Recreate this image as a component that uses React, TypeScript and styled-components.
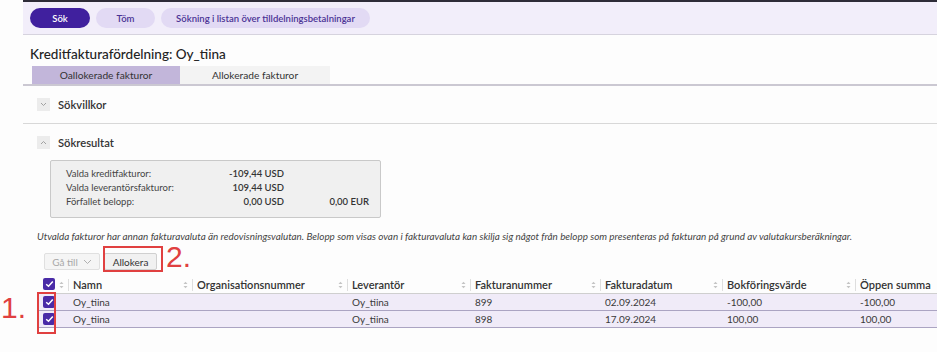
import React from "react";
import styled, { createGlobalStyle } from "styled-components";

const Global = createGlobalStyle`
  html, body { margin: 0; padding: 0; background: #fdfdfd; }
  body { font-family: Lato, "Noto Sans", sans-serif; color: #222; }
  * { box-sizing: border-box; }
`;

const Page = styled.div`
  position: relative;
  width: 937px;
  height: 352px;
  overflow: hidden;
  padding-left: 23px;
`;

const Main = styled.div`
  border-top: 2px solid #2e2c38;
`;

const Toolbar = styled.div`
  height: 33px;
  background: #f2eefa;
  border-bottom: 1px solid #d6d3de;
  display: flex;
  align-items: center;
  gap: 6px;
  padding: 0 7px;
`;

const PillButton = styled.button<{ $primary?: boolean; $w: number }>`
  height: 20px;
  width: ${(p) => p.$w}px;
  border: none;
  border-radius: 10px;
  font-family: inherit;
  font-size: 9.5px;
  font-weight: 600;
  padding: 0;
  background: ${(p) => (p.$primary ? "#40209e" : "#e2daf4")};
  color: ${(p) => (p.$primary ? "#ffffff" : "#4b3394")};
`;

const Title = styled.h1`
  margin: 0;
  padding: 6px 7px 0;
  height: 31px;
  display: flex;
  align-items: center;
  font-size: 13.5px;
  font-weight: 500;
  color: #222;
`;

const Tabs = styled.div`
  display: flex;
  padding-left: 9px;
  border-bottom: 2px solid #cbc8d2;
`;

const Tab = styled.div<{ $active?: boolean; $w: number }>`
  width: ${(p) => p.$w}px;
  height: 18px;
  display: flex;
  align-items: center;
  justify-content: center;
  font-size: 10.2px;
  color: #333;
  background: ${(p) => (p.$active ? "#c2b6da" : "#f3f3f3")};
`;

const SectionHead = styled.div<{ $h: number; $border?: boolean }>`
  height: ${(p) => p.$h}px;
  display: flex;
  align-items: center;
  gap: 8px;
  padding-left: 14px;
  font-size: 11.2px;
  font-weight: 600;
  color: #333;
  border-bottom: ${(p) => (p.$border ? "1px solid #d8d8d8" : "none")};
`;

const ChevronBox = styled.span`
  width: 13px;
  height: 13px;
  background: #ececec;
  display: inline-flex;
  align-items: center;
  justify-content: center;
`;

const Summary = styled.div`
  margin-left: 27px;
  width: 331px;
  height: 58px;
  background: #f0f0f0;
  border: 1px solid #c9c9c9;
  border-radius: 2px;
  padding: 5px 11px 0 15px;
  display: grid;
  grid-template-columns: 134px 84px 85px;
  grid-auto-rows: 14px;
  font-size: 9.5px;
  color: #444;
  align-items: center;
`;

const SumLabel = styled.span``;
const SumValue = styled.span`
  text-align: right;
  font-weight: 600;
  color: #333;
`;

const Note = styled.p`
  margin: 0;
  padding: 12px 0 0 14px;
  height: 29px;
  font-size: 9.9px;
  line-height: 12px;
  font-style: italic;
  color: #444;
  white-space: nowrap;
`;

const ActionRow = styled.div`
  display: flex;
  gap: 4px;
  padding: 6px 0 0 21px;
  height: 28px;
`;

const ActionButton = styled.button<{ $disabled?: boolean; $w: number }>`
  width: ${(p) => p.$w}px;
  height: 17px;
  padding: 0;
  font-family: inherit;
  font-size: 10px;
  border: 1px solid ${(p) => (p.$disabled ? "#e0e0e0" : "#d0d0d0")};
  background: ${(p) => (p.$disabled ? "#f5f5f5" : "#f1f1f1")};
  color: ${(p) => (p.$disabled ? "#a8a8a8" : "#333")};
  border-radius: 2px;
  display: inline-flex;
  align-items: center;
  justify-content: center;
  gap: 5px;
`;

const Table = styled.div`
  margin-left: 14px;
`;

const cols = "31px 124px 155px 123px 130px 122px 133px 1fr";

const HeadRow = styled.div`
  display: grid;
  grid-template-columns: ${cols};
  height: 19px;
  border-bottom: 1px solid #cfcfcf;
  font-size: 11px;
  font-weight: 600;
  color: #333;
`;

const HeadCell = styled.div<{ $sep?: boolean }>`
  position: relative;
  display: flex;
  align-items: center;
  padding-left: 5px;
  ${(p) =>
    p.$sep
      ? `&::before { content: ""; position: absolute; left: 0; top: 4px; height: 12px; width: 1px; background: #dedede; }`
      : ""}
`;

const SortIcon = styled.svg`
  position: absolute;
  right: 4px;
  top: 6px;
`;

const BodyRow = styled.div`
  display: grid;
  grid-template-columns: ${cols};
  height: 17px;
  background: #f0ebf8;
  border-bottom: 1px solid #aba4c2;
  font-size: 10px;
  color: #3a3a3a;
`;

const Cell = styled.div`
  display: flex;
  align-items: center;
  padding-left: 5px;
  white-space: nowrap;
  overflow: hidden;
`;

const CheckCell = styled.div`
  position: relative;
  display: flex;
  align-items: center;
  padding-left: 6px;
`;

const Check = styled.span`
  width: 12px;
  height: 12px;
  border-radius: 2px;
  background: #4a2ba7;
  display: inline-flex;
  align-items: center;
  justify-content: center;
`;

const RedBox = styled.div<{ $x: number; $y: number; $w: number; $h: number }>`
  position: absolute;
  left: ${(p) => p.$x}px;
  top: ${(p) => p.$y}px;
  width: ${(p) => p.$w}px;
  height: ${(p) => p.$h}px;
  border: 2px solid #e04040;
`;

const RedLabel = styled.div<{ $x: number; $y: number }>`
  position: absolute;
  left: ${(p) => p.$x}px;
  top: ${(p) => p.$y}px;
  font-family: "Liberation Sans", Arial, sans-serif;
  font-size: 30px;
  color: #e04040;
  line-height: 1;
`;

const Chevron = ({ up }: { up?: boolean }) => (
  <svg width="7" height="5" viewBox="0 0 7 5">
    <path
      d={up ? "M1 4 L3.5 1.5 L6 4" : "M1 1 L3.5 3.5 L6 1"}
      fill="none"
      stroke="#999"
      strokeWidth="0.9"
    />
  </svg>
);

const CheckMark = () => (
  <svg width="9" height="8" viewBox="0 0 9 8">
    <path d="M1.2 4.2 L3.5 6.3 L7.8 1.5" fill="none" stroke="#fff" strokeWidth="1.5" />
  </svg>
);

const Sort = () => (
  <SortIcon width="5" height="8" viewBox="0 0 5 8">
    <path d="M0.5 3 L2.5 0.8 L4.5 3 Z" fill="#c4c4c4" />
    <path d="M0.5 5 L2.5 7.2 L4.5 5 Z" fill="#c4c4c4" />
  </SortIcon>
);

const headers = [
  "Namn",
  "Organisationsnummer",
  "Leverantör",
  "Fakturanummer",
  "Fakturadatum",
  "Bokföringsvärde",
  "Öppen summa",
];

const rows = [
  { name: "Oy_tiina", lev: "Oy_tiina", nr: "899", date: "02.09.2024", bok: "-100,00", open: "-100,00" },
  { name: "Oy_tiina", lev: "Oy_tiina", nr: "898", date: "17.09.2024", bok: "100,00", open: "100,00" },
];

export default function App() {
  return (
    <Page>
      <Global />
      <Main>
        <Toolbar>
          <PillButton $primary $w={60}>Sök</PillButton>
          <PillButton $w={59}>Töm</PillButton>
          <PillButton $w={209}>Sökning i listan över tilldelningsbetalningar</PillButton>
        </Toolbar>
        <Title>Kreditfakturafördelning: Oy_tiina</Title>
        <Tabs>
          <Tab $active $w={148}>Oallokerade fakturor</Tab>
          <Tab $w={150}>Allokerade fakturor</Tab>
        </Tabs>
        <SectionHead $h={38} $border>
          <ChevronBox><Chevron /></ChevronBox>
          Sökvillkor
        </SectionHead>
        <SectionHead $h={36}>
          <ChevronBox><Chevron up /></ChevronBox>
          Sökresultat
        </SectionHead>
        <Summary>
          <SumLabel>Valda kreditfakturor:</SumLabel>
          <SumValue>-109,44 USD</SumValue>
          <span />
          <SumLabel>Valda leverantörsfakturor:</SumLabel>
          <SumValue>109,44 USD</SumValue>
          <span />
          <SumLabel>Förfallet belopp:</SumLabel>
          <SumValue>0,00 USD</SumValue>
          <SumValue>0,00 EUR</SumValue>
        </Summary>
        <Note>
          Utvalda fakturor har annan fakturavaluta än redovisningsvalutan. Belopp som visas ovan i fakturavaluta kan skilja sig något från belopp som presenteras på fakturan på grund av valutakursberäkningar.
        </Note>
        <ActionRow>
          <ActionButton $disabled $w={56}>
            Gå till
            <svg width="9" height="6" viewBox="0 0 9 6">
              <path d="M1 1 L4.5 4.5 L8 1" fill="none" stroke="#b0b0b0" strokeWidth="1" />
            </svg>
          </ActionButton>
          <ActionButton $w={53}>Allokera</ActionButton>
        </ActionRow>
        <Table>
          <HeadRow>
            <CheckCell>
              <Check><CheckMark /></Check>
              <Sort />
            </CheckCell>
            {headers.map((h, i) => (
              <HeadCell key={h} $sep>
                {h}
                {i < headers.length - 1 && <Sort />}
              </HeadCell>
            ))}
          </HeadRow>
          {rows.map((r) => (
            <BodyRow key={r.nr}>
              <CheckCell>
                <Check><CheckMark /></Check>
              </CheckCell>
              <Cell>{r.name}</Cell>
              <Cell />
              <Cell>{r.lev}</Cell>
              <Cell>{r.nr}</Cell>
              <Cell>{r.date}</Cell>
              <Cell>{r.bok}</Cell>
              <Cell>{r.open}</Cell>
            </BodyRow>
          ))}
        </Table>
      </Main>
      <RedBox $x={103} $y={246} $w={60} $h={26} />
      <RedLabel $x={166} $y={242}>2.</RedLabel>
      <RedBox $x={37} $y={292} $w={19} $h={42} />
      <RedLabel $x={1} $y={293}>1.</RedLabel>
    </Page>
  );
}
